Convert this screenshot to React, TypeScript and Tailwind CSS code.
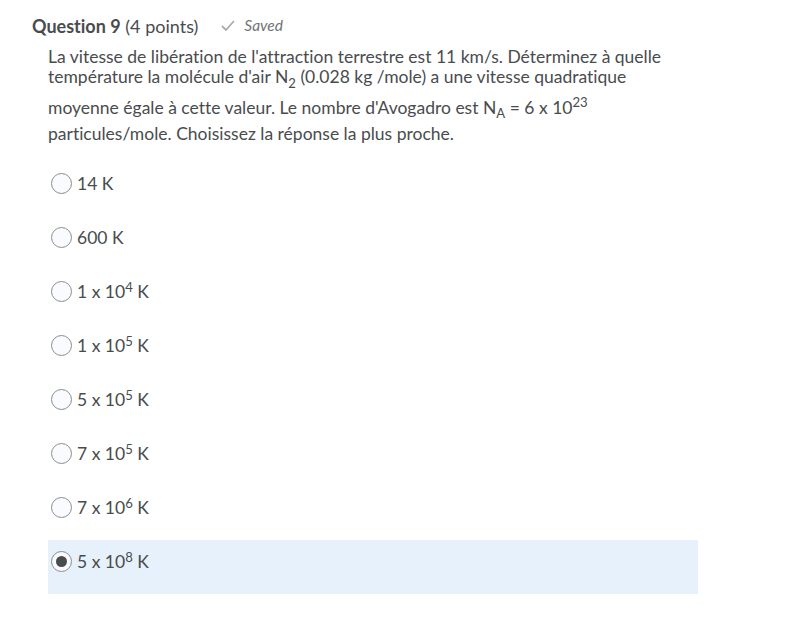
import React from 'react';

// answer choices for the quiz question
const choices: { base: string; exp?: string; unit: string }[] = [
  { base: '14', unit: 'K' },
  { base: '600', unit: 'K' },
  { base: '1 x 10', exp: '4', unit: 'K' },
  { base: '1 x 10', exp: '5', unit: 'K' },
  { base: '5 x 10', exp: '5', unit: 'K' },
  { base: '7 x 10', exp: '5', unit: 'K' },
  { base: '7 x 10', exp: '6', unit: 'K' },
  { base: '5 x 10', exp: '8', unit: 'K' },
];

function Radio({ checked }: { checked: boolean }) {
  return (
    <span className="w-[21px] h-[21px] rounded-full border border-[#8a8c8e] bg-[#f9fbff] flex items-center justify-center shrink-0">
      {checked && <span className="w-[11px] h-[11px] rounded-full bg-[#494c4e]" />}
    </span>
  );
}

export default function App() {
  const selected = 7;

  return (
    <div
      className="min-h-[617px] w-[785px] bg-white text-[#494c4e] [font-variant-ligatures:none]"
      style={{ fontFamily: 'Lato, "Noto Sans", sans-serif' }}
    >
      <div className="pl-[32px] pt-[13px]">
        {/* Header */}
        <div className="flex items-center gap-[23px] h-[26px]">
          <h2 className="text-[18px]">
            <span className="font-bold">Question 9</span> (4 points)
          </h2>
          <div className="flex items-center gap-[9px] text-[#6e7376]">
            <svg width="14" height="12" viewBox="0 0 14 12" fill="none">
              <path d="M1.5 6.5 L5 10 L12.5 1.5" stroke="#a9acaf" strokeWidth="1.8" strokeLinecap="round" strokeLinejoin="round" />
            </svg>
            <span className="italic text-[15.5px]">Saved</span>
          </div>
        </div>

        {/* Question text */}
        <div className="pl-[16px] pt-[8px]">
          <p className="w-[640px] text-[17.5px] leading-[20px]">
            La vitesse de libération de l'attraction terrestre est 11 km/s. Déterminez à quelle température la
            molécule d'air N<span className="align-sub text-[75%] leading-normal">2</span> (0.028 kg /mole) a une
            vitesse quadratique moyenne égale à cette valeur. Le nombre d'Avogadro est N
            <span className="align-sub text-[75%] leading-normal">A</span> = 6 x 10
            <span className="align-super text-[75%] leading-normal">23</span> particules/mole. Choisissez la réponse
            la plus proche.
          </p>

          {/* Choices */}
          <div className="mt-[18px] w-[650px] flex flex-col">
            {choices.map((c, i) => (
              <label
                key={i}
                className={`flex items-start gap-[5px] h-[54px] pt-[11px] pl-[3px] text-[17.5px] ${
                  i === selected ? 'bg-[#e7f1fb]' : ''
                }`}
              >
                <Radio checked={i === selected} />
                <span className="leading-[22px]">
                  {c.base}
                  {c.exp && <sup className="text-[75%]">{c.exp}</sup>} {c.unit}
                </span>
              </label>
            ))}
          </div>
        </div>
      </div>
    </div>
  );
}
